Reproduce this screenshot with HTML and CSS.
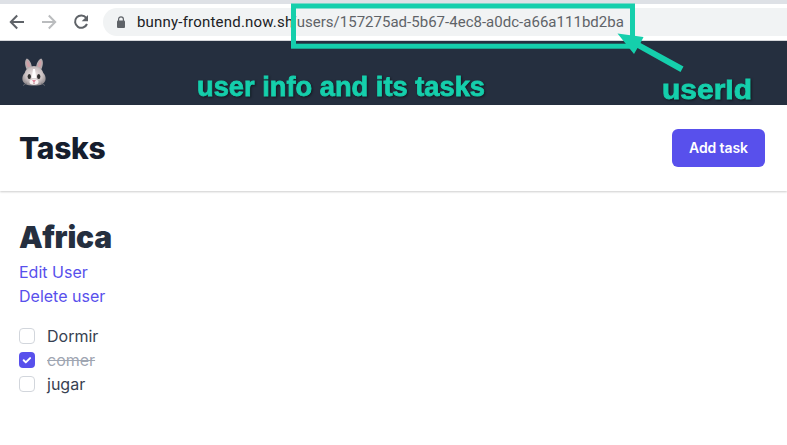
FILE: index.html
```
<!DOCTYPE html>
<html lang="en">
<head>
<meta charset="utf-8">
<title>Tasks</title>
<link rel="stylesheet" href="styles.css">
</head>
<body>
<div class="browser">
  <svg class="nav-icons" width="103" height="36" viewBox="0 0 103 36" fill="none" stroke="#5f6368" stroke-width="2">
    <path d="M24 18H11M17.2 11.5L10.8 18l6.4 6.5"/>
    <path stroke="#babcbe" d="M42 18h13M48.8 11.5l6.4 6.5-6.4 6.5"/>
    <path d="M86.2 13.8A6.2 6.2 0 1 0 87 20"/>
    <path fill="#5f6368" stroke="none" d="M88 11v6.3h-6.3z"/>
  </svg>
  <div class="address">
    <svg class="lock" width="10" height="13" viewBox="0 0 10 13"><rect x="1" y="4.5" width="8" height="7.5" rx="1" fill="#5f6368"/><path d="M2.6 5V3.2a2.4 2.4 0 0 1 4.8 0V5" fill="none" stroke="#5f6368" stroke-width="1.2"/></svg>
    <span class="host">bunny-frontend.now.sh</span><span class="path">/users/157275ad-5b67-4ec8-a0dc-a66a111bd2ba</span>
  </div>
</div>
<header class="banner">
  <svg class="bunny" width="28" height="32" viewBox="0 0 28 32">
    <defs><radialGradient id="fur" cx=".5" cy=".45" r=".6"><stop offset="0" stop-color="#eee6e6"/><stop offset=".6" stop-color="#cbc2c3"/><stop offset="1" stop-color="#8c8689"/></radialGradient></defs>
    <path d="M6.500 13C4.400 8 4.800 4 6.800 2.500C9.500 3 11.800 8 12 12zM21.500 13C23.600 8 23.200 4 21.200 2.500C18.500 3 16.200 8 16 12z" fill="#b5acae"/>
    <path d="M7.600 11C6.500 8 6.300 5.500 7.100 4.300C9 6 10 8.500 10.200 11zM20.400 11C21.500 8 21.700 5.500 20.900 4.300C19 6 18 8.500 17.800 11z" fill="#d0a0a7"/>
    <path d="M14 10C8.500 10 6 13 4.700 17C1.500 20 1.400 26 5.500 28C8 30 20 30 22.500 28C26.600 26 26.500 20 23.300 17C22 13 19.500 10 14 10z" fill="url(#fur)"/>
    <path d="M13 13h2l1.200 9h-4.400z" fill="#fff"/>
    <ellipse cx="14" cy="26" rx="4.500" ry="2.700" fill="#f9f3f3"/>
    <ellipse cx="9.300" cy="20.500" rx="1.700" ry="2.500" fill="#303030"/><ellipse cx="18.700" cy="20.500" rx="1.700" ry="2.500" fill="#303030"/>
    <path d="M12 24.200h4L14 26.200z" fill="#d96480"/><path d="M13.300 26.500h1.400v1.300h-1.400z" fill="#b5737d"/>
    <path d="M3 29.500l4-2.500M25 29.500l-4-2.500" stroke="#77757b" stroke-width=".7"/>
  </svg>
</header>
<section class="titlebar">
  <h1>Tasks</h1>
  <button class="add" type="button">Add task</button>
</section>
<main>
  <h2>Africa</h2>
  <a class="link">Edit User</a>
  <a class="link delete">Delete user</a>
  <ul class="tasks">
    <li><span class="box"></span><span class="dormir">Dormir</span></li>
    <li class="done"><span class="box"><svg width="16" height="16" viewBox="0 0 16 16"><path d="M4.700 8.300l2.100 2.100 4.300-4.300" fill="none" stroke="#fff" stroke-width="2" stroke-linecap="round" stroke-linejoin="round"/></svg></span><span class="comer">comer</span></li>
    <li><span class="box"></span><span class="jugar">jugar</span></li>
  </ul>
</main>
<svg class="notes" width="787" height="110" viewBox="0 0 787 110">
  <rect x="293.500" y="6" width="339" height="40.200" fill="none" stroke="#15cfac" stroke-width="5"/>
  <path d="M617.500 33.500L643.500 37 640.500 43 683.500 66.500 680.500 72 637.500 48 634 54z" fill="#15cfac"/>
  <text x="197" y="96" textLength="288" lengthAdjust="spacingAndGlyphs">user info and its tasks</text>
  <text x="662" y="99" textLength="90" lengthAdjust="spacingAndGlyphs">userId</text>
</svg>
</body>
</html>
```
FILE: styles.css
```
* { box-sizing: border-box; }
body { margin: 0; height: 445px; overflow: hidden; background: #fff; color: #374151; font: 16px/24px Inter, sans-serif; }
.browser { height: 41px; display: flex; background: #fff; border-top: 4px solid #dee1e6; border-bottom: 1px solid #d5d7da; }
.nav-icons { flex: none; }
.address { flex: 1; height: 28px; margin-top: 4px; padding-left: 13px; display: flex; align-items: center; background: #f1f3f4; border-radius: 14px 0 0 14px; font: 15px/28px Roboto, sans-serif; white-space: nowrap; }
.lock { margin-right: 11px; }
.host { color: #202124; letter-spacing: .2px; }
.path { color: #5f6368; margin-left: -3px; letter-spacing: .02px; }
.banner { height: 64px; padding: 15px 20px; background: #252f3f; }
.bunny { display: block; }
.titlebar { height: 86px; padding: 0 22px 0 19px; display: flex; align-items: center; justify-content: space-between; box-shadow: 0 1px 2px rgba(0,0,0,.2); }
h1, h2 { margin: 0; }
h1 { color: #161e2e; font-size: 30px; line-height: 36px; font-weight: 800; letter-spacing: -.3px; }
.add { width: 93px; height: 38px; padding: 0; border: 0; border-radius: 6px; background: #5850ec; color: #fff; font: 600 14px/20px Inter, sans-serif; letter-spacing: -.1px; }
main { padding: 26px 19px; }
h2 { color: #252f3f; font-size: 30px; line-height: 40px; font-weight: 900; letter-spacing: -.2px; margin-bottom: 3px; }
.link { display: block; width: max-content; color: #5850ec; }
.tasks { margin: 16px 0 0; padding: 0; list-style: none; }
.tasks li { display: flex; align-items: center; height: 24px; }
.box { width: 16px; height: 16px; margin-right: 12px; border: 1px solid #d2d6dc; border-radius: 4px; }
.done .box { border: 0; background: #5850ec; }
.box svg { display: block; }
.comer { color: #9fa6b2; text-decoration: line-through; }
.notes { position: absolute; left: 0; top: 0; }
.notes text { font: bold 27px "Liberation Sans", sans-serif; fill: #15cfac; stroke: #15cfac; stroke-width: .8px; filter: drop-shadow(1px 1px 1px rgba(0,0,0,.5)); }
```
